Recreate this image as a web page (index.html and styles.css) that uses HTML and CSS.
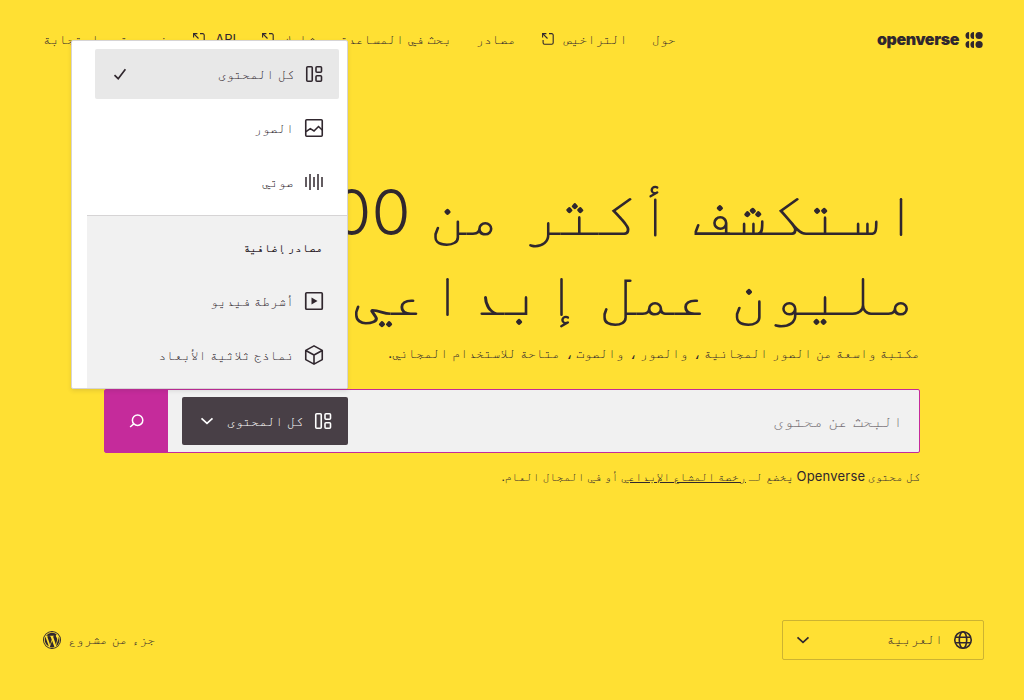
FILE: index.html
```html
<!DOCTYPE html>
<html lang="ar" dir="rtl">
<head>
<meta charset="utf-8">
<title>Openverse</title>
<link rel="stylesheet" href="styles.css">
</head>
<body>
<svg class="defs" width="0" height="0">
  <symbol id="all" viewBox="0 0 24 24"><g fill="none" stroke="currentColor" stroke-width="1.6"><rect x="4.750" y="4.750" width="5.500" height="14.500" rx="1"/><rect x="14" y="4.750" width="5.500" height="5.500" rx="1"/><rect x="14" y="13.750" width="5.500" height="5.500" rx="1"/></g></symbol>
  <symbol id="ext" viewBox="0 0 14 14"><path d="M1.6 5.4V1.6H5.4M1.6 1.6L6.500 6.500M8 1.600h2.700a1.500 1.500 0 0 1 1.500 1.500v7.600a1.500 1.500 0 0 1-1.500 1.500H3.600a1.500 1.500 0 0 1-1.500-1.500V8" fill="none" stroke="currentColor" stroke-width="1.1"/></symbol>
  <symbol id="chev" viewBox="0 0 24 24"><path d="M6.5 9.3L12 14.3l5.5-5" fill="none" stroke="currentColor" stroke-width="1.7"/></symbol>
</svg>
<div class="page">
  <header class="header">
    <a class="logo">
      <svg class="mark" viewBox="0 0 18 18"><g fill="currentColor"><circle cx="13.600" cy="4.500" r="3.600"/><circle cx="13.600" cy="13.500" r="3.600"/><path d="M8.500.9v7.200a3.600 3.600 0 0 1 0-7.200zM8.500 9.900v7.200a3.600 3.600 0 0 1 0-7.200zM3.600.9v7.200a3.600 3.600 0 0 1 0-7.200zM3.600 9.900v7.200a3.600 3.600 0 0 1 0-7.200z"/></g></svg>
      <span class="wordmark">openverse</span>
    </a>
    <nav class="nav">
      <a>حول</a>
      <a>التراخيص<svg class="ext"><use href="#ext"/></svg></a>
      <a>مصادر</a>
      <a>بحث في المساعدة</a>
      <a>شارك<svg class="ext"><use href="#ext"/></svg></a>
      <a><span class="latin">API</span><svg class="ext"><use href="#ext"/></svg></a>
      <a class="feedback">خصوصية و استجابة</a>
    </nav>
  </header>
  <main class="hero">
    <h1 class="title">استكشف أكثر من 700 مليون عمل إبداعي</h1>
    <p class="subtitle">مكتبة واسعة من الصور المجانية ، والصور ، والصوت ، متاحة للاستخدام المجاني.</p>
    <div class="search">
      <span class="placeholder">البحث عن محتوى</span>
      <div class="type">
        <svg class="icon"><use href="#all"/></svg>
        <span class="type-label">كل المحتوى</span>
        <svg class="icon"><use href="#chev"/></svg>
      </div>
      <div class="submit"><svg class="icon" viewBox="0 0 24 24"><g fill="none" stroke="currentColor" stroke-width="1.5"><circle cx="12.600" cy="11.2" r="5.2"/><path d="M8.800 14.900L5.100 18"/></g></svg></div>
      <div class="menu">
        <div class="group">
          <div class="item selected"><svg class="icon"><use href="#all"/></svg><span>كل المحتوى</span>
            <svg class="icon check" viewBox="0 0 24 24"><path d="M6.5 13.2l3.7 3.5L17.4 7.3" fill="none" stroke="currentColor" stroke-width="1.7"/></svg></div>
          <div class="item"><svg class="icon" viewBox="0 0 24 24"><g fill="none" stroke="currentColor" stroke-width="1.6"><rect x="3.75" y="3.75" width="16.5" height="16.5" rx="1"/><path d="M4 15.6l4.300-3 3.700 2.400 4.500-4.500 3.700 3.500"/></g></svg><span>الصور</span></div>
          <div class="item"><svg class="icon" viewBox="0 0 24 24"><path d="M4 7v10M8 4v16M12 7v10M16 4v16M20 7v10" stroke="currentColor" stroke-width="1.5"/></svg><span>صوتي</span></div>
        </div>
        <div class="group extra">
          <h2 class="group-title">مصادر إضافية</h2>
          <div class="item"><svg class="icon" viewBox="0 0 24 24"><rect x="3.75" y="3.75" width="16.5" height="16.5" rx="1" fill="none" stroke="currentColor" stroke-width="1.7"/><path d="M9.500 8.500l6 3.500-6 3.500z" fill="currentColor"/></svg><span>أشرطة فيديو</span></div>
          <div class="item"><svg class="icon" viewBox="0 0 24 24"><path d="M12 2.900l8.250 4.500v9.200L12 21.100l-8.250-4.500V7.400zM3.750 7.500L12 12l8.250-4.500M12 12v9" fill="none" stroke="currentColor" stroke-width="1.6" stroke-linejoin="round"/></svg><span>نماذج ثلاثية الأبعاد</span></div>
        </div>
      </div>
    </div>
    <p class="license">كل محتوى <span class="brand">Openverse</span> يخضع لـ <a class="link">رخصة المشاع الإبداعي</a> أو في المجال العام.</p>
  </main>
  <footer class="footer">
    <div class="language">
      <svg class="icon" viewBox="0 0 24 24"><g fill="none" stroke="currentColor" stroke-width="1.6"><circle cx="12" cy="12" r="8.250"/><ellipse cx="12" cy="12" rx="3.700" ry="8.250"/><path d="M4.500 9.300h15M4.500 14.700h15"/></g></svg>
      <span class="language-name">العربية</span>
      <svg class="icon"><use href="#chev"/></svg>
    </div>
    <a class="wordpress"><span class="raised">جزء من مشروع</span>
      <svg class="wp" viewBox="0 0 24 24"><path fill="currentColor" fill-rule="evenodd" d="M12 0a12 12 0 1 0 0 24 12 12 0 0 0 0-24zm0 1.200a10.800 10.800 0 1 1 0 21.600A10.800 10.800 0 0 1 12 1.200z"/><path fill="currentColor" d="M2.300 12c0-1.490.32-2.910.89-4.190l4.600 12.600A9.900 9.900 0 0 1 2.300 12zM12 21.900c-1.010 0-1.980-.15-2.910-.42l3.090-8.600 3.100 8.500c-1 .34-2.120.52-3.280.52zm1.420-14.720c.62-.03 1.180-.1 1.180-.1.550-.07.490-.88-.07-.85 0 0-1.670.13-2.750.13-1.010 0-2.710-.13-2.710-.13-.55-.03-.62.820-.07.850 0 0 .53.070 1.080.1l1.610 4.400-2.260 6.760-3.750-11.160c.62-.03 1.180-.1 1.180-.1.550-.07.490-.88-.07-.85 0 0-1.670.13-2.740.13A9.900 9.900 0 0 1 18.700 4.750c-1.010 0-1.600.6-1.600 1.480 0 .85.490 1.570 1.010 2.420.39.690.85 1.570.85 2.840 0 .88-.34 1.900-.78 3.330l-1.030 3.430zm3.760 13.300l3.140-9.090c.4-1.200.6-2.300.6-3.600A9.900 9.900 0 0 1 17.180 20.480z"/></svg>
    </a>
  </footer>
</div>
</body>
</html>
```
FILE: styles.css
```css
* { box-sizing: border-box; margin: 0; }
body {
  height: 700px;
  overflow: hidden;
  background: #ffe033;
  color: #30272e;
  font: 13.33px/20px Inter, FreeMono, monospace;
}
.defs { position: absolute; }
.page { height: 700px; display: flex; flex-direction: column; }
.header {
  height: 80px;
  padding: 0 40px;
  display: flex;
  align-items: center;
}
.logo { width: 308px; flex: none; display: flex; align-items: center; gap: 6px; }
.mark { width: 19px; height: 18px; }
.wordmark { font-size: 16px; line-height: 20px; margin-bottom: 2px; font-weight: 900; letter-spacing: -0.4px; }
.nav { display: flex; gap: 24.5px; margin-bottom: 2px; }
.nav a { display: flex; align-items: center; gap: 9px; white-space: nowrap; }
.ext { width: 14px; height: 14px; }
.latin { font-size: 13px; }
.nav .feedback { word-spacing: 2.5px; }
.hero { flex: 1; padding: 93px 104px 0; }
.title { font-size: 63.33px; line-height: 79.5px; font-weight: 300; }
.subtitle {
  margin-top: 11px;
  font-size: 13.33px;
  line-height: 20px;
  word-spacing: 0.25px;
  white-space: nowrap;
}
.search {
  position: relative;
  margin-top: 26px;
  height: 64px;
  display: flex;
  align-items: center;
  border: 1px solid #c52b9b;
  border-radius: 2px;
  background: #f1f1f1;
}
.placeholder { flex: 1; padding-inline-start: 16px; font-size: 16.67px; color: #7a7479; }
.icon { width: 24px; height: 24px; flex: none; }
.type {
  width: 166px;
  height: 48px;
  margin-inline-end: 14px;
  padding: 0 13px;
  display: flex;
  align-items: center;
  gap: 8px;
  border-radius: 2px;
  background: #483f46;
  color: #fff;
}
.type-label { flex: 1; white-space: nowrap; }
.submit {
  width: 63px;
  height: 62px;
  display: grid;
  place-items: center;
  background: #c52b9b;
  color: #fff;
}
.menu {
  position: absolute;
  left: -34px;
  bottom: 63px;
  width: 277px;
  height: 349px;
  padding-left: 15px;
  border: 1px solid #d6d4d5;
  border-radius: 2px;
  background: #fff;
  box-shadow: 0 2px 4px rgba(48, 39, 46, 0.12);
}
.group { padding: 8px; display: flex; flex-direction: column; gap: 4px; }
.extra { border-top: 1px solid #d6d4d5; background: #f1f1f1; }
.group-title {
  height: 48px;
  padding: 14px 16px 0;
  font-size: 11.67px;
  line-height: 20px;
  font-weight: 600;
}
.item {
  height: 50px;
  padding: 0 13px;
  display: flex;
  align-items: center;
  gap: 8px;
  border-radius: 2px;
}
.selected { background: #e8e8e8; }
.check { margin-inline-start: auto; }
.license { margin-top: 13px; font-size: 11.67px; line-height: 20px; word-spacing: -0.4px; }
.brand { font-size: 13px; letter-spacing: 0.2px; }
.link { text-decoration: underline; }
.footer {
  height: 80px;
  padding: 0 40px 0 43px;
  display: flex;
  align-items: center;
  justify-content: space-between;
  margin-bottom: 20px;
}
.language {
  width: 202px;
  height: 40px;
  padding: 0 8px;
  display: flex;
  align-items: center;
  gap: 8px;
  border: 1px solid rgba(48, 39, 46, 0.24);
  border-radius: 2px;
}
.language-name { flex: 1; margin-bottom: 2px; }
.wordpress { display: flex; align-items: center; gap: 7px; }
.raised { margin-bottom: 2px; }
.wp { width: 18px; height: 18px; }
```
